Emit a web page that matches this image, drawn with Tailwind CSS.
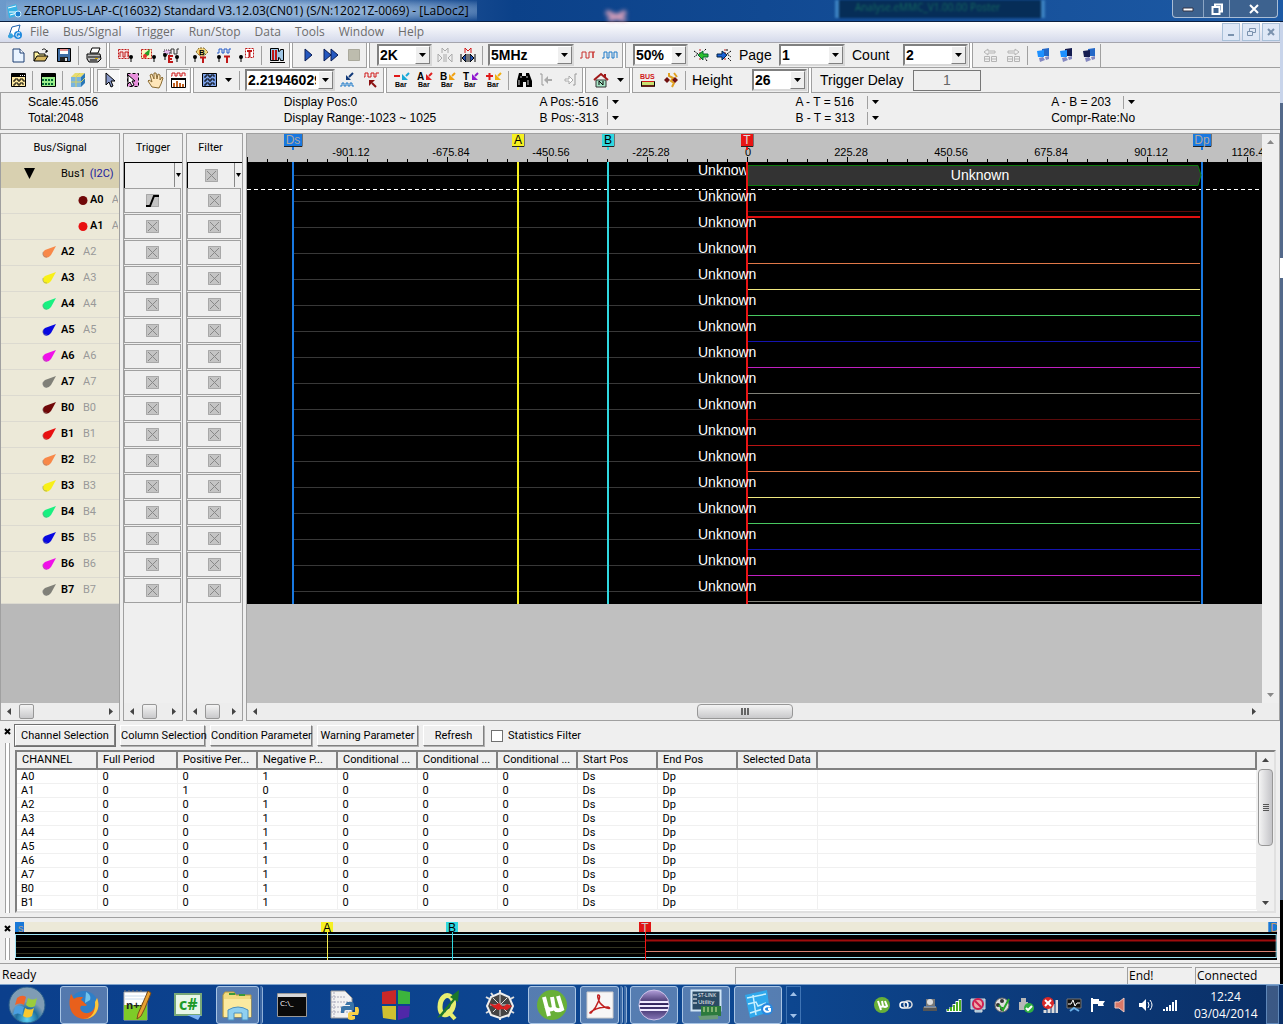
<!DOCTYPE html>
<html lang="en">
<head>
    <meta charset="UTF-8">
    <meta name="viewport" content="width=device-width, initial-scale=1.0">
    <title>ZEROPLUS-LAP-C(16032) Standard V3.12.03(CN01) (S/N:12021Z-0069) - [LaDoc2]</title>
    <script src="https://cdn.jsdelivr.net/npm/@tailwindcss/browser@4"></script>
</head>
<body class="flex min-h-screen flex-col bg-[linear-gradient(#c8d4ea_103px,#53698a_103px,#53698a_258px,#fff_258px,#fff_278px,#53698a_278px,#53698a_900px,#000_900px)] font-['Roboto',sans-serif] text-[11px] leading-[14px] text-black">
    <!-- Title bar -->
    <header class="flex h-[22px] items-start justify-between border-b border-[#0a1f40] bg-linear-to-r from-[#6c9acb] from-0% via-[#0b4189] via-40% to-[#1d5aa5] pl-[6px] pr-[5px] font-['Open_Sans',sans-serif]">
        <div class="flex h-[21px] items-center gap-[2px] bg-radial from-[#8fb0d6] from-40% to-transparent">
            <svg class="h-4 w-4" viewBox="0 0 16 16"><path d="M1 4l9-3 3 11-10 3z" fill="#39b4e6"/><path d="M2 5l8-2M3 9h7M4 12l7-2" stroke="#fff"/><circle cx="12" cy="11" r="3" fill="#1b7fd0" stroke="#cdefff"/></svg>
            <h1 class="pr-2 text-[12px] whitespace-nowrap">ZEROPLUS-LAP-C(16032) Standard V3.12.03(CN01) (S/N:12021Z-0069) - [LaDoc2]</h1>
        </div>
        <svg class="h-[21px] w-6 blur-[2px]" viewBox="0 0 24 21"><path d="M2 12l20 9M22 12L4 21" stroke="#d09cb8" stroke-width="5"/></svg>
        <div class="ml-20 h-[18px] w-[210px] border-x-4 border-[#3a80c0] bg-[#062d57] pl-4 text-[10px] text-[#156a60] blur-[1px]">Analyse.eMMC_V1.00.00 Poster</div>
        <div class="flex h-[18px] rounded-b border border-t-0 border-[#a9bdd6] bg-[#3d628f]">
            <button aria-label="Minimize" class="flex w-[31px] items-center justify-center border-r border-[#8ba5c4]"><svg class="h-3 w-3" viewBox="0 0 12 12"><path d="M1 5h10v3H1z" fill="#fff" stroke="#334"/></svg></button>
            <button aria-label="Restore" class="flex w-[26px] items-center justify-center border-r border-[#8ba5c4]"><svg class="h-3 w-3" viewBox="0 0 12 12"><path d="M4 3V1.500h7v7H9.500M1.500 4h7v7h-7z" fill="none" stroke="#fff" stroke-width="2"/></svg></button>
            <button aria-label="Close" class="flex w-[47px] items-center justify-center"><svg class="h-3 w-3" viewBox="0 0 12 12"><path d="M2 2l8 8M10 2l-8 8" stroke="#fff" stroke-width="2"/></svg></button>
        </div>
    </header>

    <div class="mr-[3px] flex flex-1 flex-col bg-[#efefef]">
        <!-- Menu bar -->
        <nav class="flex h-[21px] items-center border-b border-[#a5a5ad] bg-linear-to-b from-white to-[#d5daeb] pl-[7px] font-['Open_Sans',sans-serif] text-[12px] text-[#6d6d6d]">
            <svg class="mr-[7px] h-4 w-4" viewBox="0 0 16 16"><path d="M2 12l3-9 8-2-3 11z" fill="#fff" stroke="#1b5fae"/><path d="M1 12c2-4 5-3 5 0s-4 3-5 1z" fill="#35a4e0"/><circle cx="11" cy="11" r="4" fill="#1f8adf"/><path d="M13 9c-2-1-4 0-4 2s3 3 4 1h-2" fill="none" stroke="#fff"/></svg>
            <ul class="flex flex-1 gap-[14px]">
                <li><a href="#file">File</a></li>
                <li><a href="#bus">Bus/Signal</a></li>
                <li><a href="#trigger">Trigger</a></li>
                <li><a href="#run">Run/Stop</a></li>
                <li><a href="#data">Data</a></li>
                <li><a href="#tools">Tools</a></li>
                <li><a href="#window">Window</a></li>
                <li><a href="#help">Help</a></li>
            </ul>
            <div class="flex gap-[2px]">
                <button aria-label="Minimize document" class="flex h-[18px] w-[18px] items-center justify-center border border-[#a9c0d8] bg-[#dfe8f6]"><svg class="h-3 w-3" viewBox="0 0 12 12"><path d="M3 9h6" stroke="#7a92ae" stroke-width="2"/></svg></button>
                <button aria-label="Restore document" class="flex h-[18px] w-[18px] items-center justify-center border border-[#a9c0d8] bg-[#dfe8f6]"><svg class="h-3 w-3" viewBox="0 0 12 12"><path d="M4.500 5V2.500h6v4H8M2.500 5.500h5v4h-5z" fill="none" stroke="#7a92ae"/></svg></button>
                <button aria-label="Close document" class="flex h-[18px] w-[18px] items-center justify-center border border-[#a9c0d8] bg-[#dfe8f6]"><svg class="h-3 w-3" viewBox="0 0 12 12"><path d="M3 3l6 6M9 3l-6 6" stroke="#7a92ae" stroke-width="2"/></svg></button>
            </div>
        </nav>

        <!-- Toolbar, first row -->
        <div id="toolbar-1" class="flex h-[25px] items-center border-b border-[#a0a0a0] pl-[6px] font-['Liberation_Sans',sans-serif] text-[14px]">
            <button aria-label="New" class="tool"><svg viewBox="0 0 16 16"><path d="M3 2h7l4 4v9H3z" fill="#eaf4ff" stroke="#1c3f73"/><path d="M10 2v4h4" fill="#fff" stroke="#1c3f73"/></svg></button>
            <button aria-label="Open" class="tool"><svg viewBox="0 0 16 16"><path d="M1 14V5h4l1 2h6v2" fill="#fff3a0" stroke="#000"/><path d="M1 14l3-5h11l-3 5z" fill="#d8b860" stroke="#000"/><path d="M9 3c2-2 4-1 5 2m-2 0h2V3" fill="none" stroke="#000"/></svg></button>
            <button aria-label="Save" class="tool"><svg viewBox="0 0 16 16"><path d="M1.500 1.500h13v13h-13z" fill="#3f6da3" stroke="#000"/><path d="M4 2h8v5H4z" fill="#fff"/><path d="M4 3h8" stroke="#c22"/><path d="M4 10h8v4H4z" fill="#222"/><path d="M9 11h2v3H9z" fill="#ddd"/></svg></button>
            <i class="sep"></i>
            <button aria-label="Print" class="tool"><svg viewBox="0 0 16 16"><path d="M4 6l2-5h8l-2 5z" fill="#fff" stroke="#000"/><path d="M1 7h13l1 5-3 3H3l-2-3z" fill="#bcbcbc" stroke="#000"/><path d="M2 10h12M4 13h7" stroke="#000"/><path d="M9 11.500h3" stroke="#d8a800"/></svg></button>
            <i class="grip"></i>
            <button aria-label="Sampling setup" class="tool"><svg viewBox="0 0 16 16"><path d="M1.500 2.500h10v9h-10z" fill="#f6dede" stroke="#c01818" stroke-dasharray="2 1"/><path d="M3 10V5h3v5h2V5h3v5" fill="none" stroke="#c01818"/><path d="M14 9v6" stroke="#000"/><circle cx="14" cy="10" r="2"/></svg></button>
            <button aria-label="Channel setup" class="tool"><svg viewBox="0 0 16 16"><path d="M1.500 2.500h10v9h-10z" fill="#fff6c0" stroke="#c01818" stroke-dasharray="2 1"/><path d="M3 11l2-5 5-4-1 6z" fill="#24a024"/><circle cx="5" cy="9" r="2" fill="#f03030"/><path d="M14 9v6" stroke="#000"/><circle cx="14" cy="10" r="2"/></svg></button>
            <button aria-label="External trigger" class="tool"><svg viewBox="0 0 16 16"><path d="M1 3h6v4H1z" fill="#e6b8ea" stroke="#333" stroke-dasharray="1 1"/><path d="M8 7V2h3v5h3V2h2" fill="none" stroke="#333"/><path d="M2 8v5" stroke="#000"/><circle cx="2" cy="8" r="2"/><path d="M10 9H6v6h4M6 12h3" fill="none" stroke="#c01818" stroke-width="2"/><path d="M14 10v5" stroke="#000"/><circle cx="14" cy="10" r="2"/></svg></button>
            <i class="sep"></i>
            <button aria-label="Bus trigger" class="tool"><svg viewBox="0 0 16 16"><path d="M3 5l3-4h5l4 4-4 4H7z" fill="#f3d57a" stroke="#7c6328" stroke-dasharray="2 1"/><text x="6" y="8" font-size="8" font-weight="bold">B</text><path d="M2 9v6" stroke="#000"/><circle cx="2" cy="10" r="2"/><path d="M7 10.500h6M10 11v5" stroke="#c01818" stroke-width="2"/></svg></button>
            <button aria-label="Pulse trigger" class="tool"><svg viewBox="0 0 16 16"><path d="M1 6h2V2h3v4h2V2h3v4h2V2h2" fill="none" stroke="#2058c8"/><path d="M3 9v6" stroke="#000"/><circle cx="3" cy="10" r="2"/><path d="M8 9.500h6M11 10v6" stroke="#c01818" stroke-width="2"/></svg></button>
            <button aria-label="Trigger position" class="tool"><svg viewBox="0 0 16 16"><path d="M6.500 1.500h8v9h-8z" fill="#fff" stroke="#c01818" stroke-dasharray="2 1"/><path d="M8 4h5M10.500 4v6" stroke="#c01818" stroke-width="2"/><path d="M2 8v7" stroke="#000"/><circle cx="2" cy="10" r="2"/></svg></button>
            <i class="sep"></i>
            <button aria-label="Data compression" class="tool"><svg viewBox="0 0 16 16"><path d="M1.500 1.500h8v3q2 0 2-2h3v11h-3q0-3-2-3v3h-8z" fill="#9fc6e6" stroke="#000"/><path d="M4 3v10M7 3v10" stroke="#c01818" stroke-width="2"/><path d="M1 15.500h15" stroke="#000"/></svg></button>
            <i class="grip"></i>
            <button aria-label="Single run" class="tool"><svg viewBox="0 0 16 16"><path d="M5 2l7 6-7 6z" fill="#2458c0" stroke="#0a1d52"/></svg></button>
            <button aria-label="Repetitive run" class="tool"><svg viewBox="0 0 16 16"><path d="M1 2l7 6-7 6zM8 2l7 6-7 6z" fill="#2458c0" stroke="#0a1d52"/></svg></button>
            <button aria-label="Stop" class="tool"><svg viewBox="0 0 16 16"><path d="M2.500 2.500h11v11h-11z" fill="#bdbcae" stroke="#aaa99c"/></svg></button>
            <i class="grip"></i>
            <label class="combo ml-1 w-[55px]"><select aria-label="Memory depth"><option>2K</option></select></label>
            <button aria-label="Previous mark" class="tool ml-px"><svg viewBox="0 0 16 16"><path d="M5 6V1l3 3 3-3v5" fill="none" stroke="#aaa"/><path d="M1 7l4 4-4 4zM15 7l-4 4 4 4zM7 7v8M9 7v8" fill="none" stroke="#aaa"/></svg></button>
            <button aria-label="Next mark" class="tool"><svg viewBox="0 0 16 16"><path d="M5 6V1l3 3 3-3v5" fill="none" stroke="#d01818"/><path d="M1 7v8M15 7v8M8 7v8" stroke="#000"/><path d="M2 11l4-4v8zM14 11l-4-4v8z" fill="#2050b0" stroke="#000"/></svg></button>
            <i class="sep"></i>
            <label class="combo ml-[2px] w-[86px]"><select aria-label="Sampling frequency"><option>5MHz</option></select></label>
            <button aria-label="Slower" class="tool ml-px"><svg viewBox="0 0 16 16"><path d="M1 11h2V5h4v6h3V5h4v6h0V5h2" fill="none" stroke="#c8302c"/></svg></button>
            <button aria-label="Faster" class="tool"><svg viewBox="0 0 16 16"><path d="M0 11h2V5h3v6h2V5h3v6h2V5h3v6" fill="none" stroke="#1a78c8"/></svg></button>
            <i class="grip"></i>
            <label class="combo ml-1 w-[55px]"><select aria-label="Trigger position percent"><option>50%</option></select></label>
            <button aria-label="Move trigger left" class="tool ml-px"><svg viewBox="0 0 16 16"><path d="M1 4l4 3-4 3M13 2l-2 2M14 14l-2-3" stroke="#000" fill="none" stroke-dasharray="2 1"/><path d="M7 2v12" stroke="#c01818" stroke-dasharray="2 1"/><path d="M5 8l5-4v3h5v3h-5v3z" fill="#2ec02e" stroke="#063"/></svg></button>
            <button aria-label="Move trigger right" class="tool"><svg viewBox="0 0 16 16"><path d="M15 4l-4 3 4 3M11 2v3M12 11l3 3" stroke="#000" fill="none" stroke-dasharray="2 1"/><path d="M9 2v12" stroke="#c01818" stroke-dasharray="2 1"/><path d="M11 8L6 4v3H1v3h5v3z" fill="#1c62d8" stroke="#024"/></svg></button>
            <label for="page" class="ml-1 w-10">Page</label>
            <span class="combo w-[66px]"><select id="page"><option>1</option></select></span>
            <label for="count" class="ml-[7px] w-[51px]">Count</label>
            <span class="combo w-[65px]"><select id="count"><option>2</option></select></span>
            <i class="grip"></i>
            <button aria-label="Previous difference" class="tool ml-[2px]"><svg viewBox="0 0 16 16"><path d="M2 5l4-3v2h7v2H6v2zM2.500 9.500h5v5h-5zM9.500 9.500h5v5h-5zM3 12h4M10 12h4" fill="none" stroke="#b4b4b4"/></svg></button>
            <button aria-label="Next difference" class="tool"><svg viewBox="0 0 16 16"><path d="M14 5l-4-3v2H3v2h7v2zM2.500 9.500h5v5h-5zM9.500 9.500h5v5h-5zM3 12h4M10 12h4" fill="none" stroke="#b4b4b4"/></svg></button>
            <i class="sep"></i>
            <button aria-label="Connect both" class="tool"><svg viewBox="0 0 16 16"><path d="M7 2l7-1v8H7z" fill="#2468c8"/><path d="M2 4l7-1v7H3z" fill="#1e90ff"/><path d="M4 11l4-1 2 3-5 2zM10 10l4-1v3l-3 1z" fill="#8488c0"/></svg></button>
            <button aria-label="Connect first" class="tool"><svg viewBox="0 0 16 16"><path d="M7 2l7-1v8H7z" fill="#141c50"/><path d="M2 4l7-1v7H3z" fill="#1e90ff"/><path d="M4 11l4-1 2 3-5 2zM10 10l4-1v3l-3 1z" fill="#8488c0"/></svg></button>
            <button aria-label="Connect second" class="tool"><svg viewBox="0 0 16 16"><path d="M7 2l7-1v8H7z" fill="#2468c8"/><path d="M2 4l7-1v7H3z" fill="#141c50"/><path d="M4 11l4-1 2 3-5 2zM10 10l4-1v3l-3 1z" fill="#8488c0"/></svg></button>
            <i class="h-[23px] w-px bg-[#a0a0a0]"></i>
        </div>

        <!-- Toolbar, second row -->
        <div id="toolbar-2" class="flex h-[25px] items-center border-b border-[#a0a0a0] pl-[6px] font-['Liberation_Sans',sans-serif] text-[14px]">
            <button aria-label="Waveform view" class="tool"><svg viewBox="0 0 16 16"><path d="M1.500 1.500h14v13h-14z" fill="#ffe9a0" stroke="#000"/><path d="M1 2h15v3H1z"/><path d="M10 3.500h5" stroke="#fff" stroke-dasharray="1 1"/><path d="M3 9h2V7h3v2h2V7h3v2h2M3 13h2v-2h3v2h2v-2h3v2" fill="none" stroke="#000"/></svg></button>
            <i class="sep"></i>
            <button aria-label="Listing view" class="tool"><svg viewBox="0 0 16 16"><path d="M1.500 1.500h14v13h-14z" fill="#9bee8a" stroke="#000"/><path d="M1 2h15v3H1z"/><path d="M3 7v2M6 7v2M9 7v2M12 7v2M3 11v2M6 11v2M9 11v2M12 11v2" stroke="#063" stroke-width="2"/></svg></button>
            <i class="sep"></i>
            <button aria-label="Navigator" class="tool"><svg viewBox="0 0 16 16"><path d="M1 5l4-4h10l-4 4z" fill="#e8dc70"/><path d="M11 5l4-4v10l-4 4z" fill="#2a78b8"/><path d="M1 5h10v10H1z" fill="#79b4e0"/><path d="M6 5v10M1 10h10M6 5l4-4M11 10l4-4" stroke="#d8d060"/></svg></button>
            <i class="grip"></i>
            <button aria-label="Select" aria-pressed="true" class="tool pressed"><svg viewBox="0 0 16 16"><path d="M5 1v12l3-3 2 5 2-1-2-5h4z" fill="#8898c8" stroke="#000"/></svg></button>
            <button aria-label="Area select" class="tool"><svg viewBox="0 0 16 16"><path d="M3.500 1.500h11v13h-11z" fill="#e890dc" stroke="#000" stroke-dasharray="3 2"/><path d="M4 3v9l2-2 2 4 2-1-2-4h3z" fill="#fff" stroke="#000"/></svg></button>
            <button aria-label="Hand" class="tool"><svg viewBox="0 0 16 16"><path d="M5 15l-4-6 1-1 3 2-2-7 2-1 2 5V1h2l1 6 1-5 2 1v5l2-3 1 1-2 6-2 4z" fill="#ffe6b8" stroke="#8a6b33"/></svg></button>
            <button aria-label="Waveform mode" aria-pressed="true" class="tool pressed"><svg viewBox="0 0 16 16"><path d="M1 4h1V1h3v3h2V1h3v3h2V1h3v3" fill="none" stroke="#d01818"/><path d="M1.500 6.500h14v9h-14z" fill="#fff" stroke="#000"/><path d="M4 15v-4M7 15V9M10 15v-4M13 15v-3" stroke="#c06020" stroke-width="2"/><path d="M1 6h15v2H1z"/></svg></button>
            <i class="grip"></i>
            <button aria-label="Bus width" class="tool"><svg viewBox="0 0 16 16"><path d="M1.500 1.500h14v13h-14z" fill="#7aa0e8" stroke="#000"/><path d="M3 5h2V3h3v2h2V3h3v2M3 9h2V7h3v2h2V7h3v2M3 13h2v-2h3v2h2v-2h3v2" fill="none" stroke="#000"/></svg></button>
            <button aria-label="Bus width menu" class="flex w-[16px] justify-center"><svg class="h-1 w-[7px]" viewBox="0 0 7 4"><path d="M0 0h7L3.500 4z"/></svg></button>
            <i class="sep"></i>
            <label class="combo ml-[2px] w-[90px]"><select aria-label="Zoom value"><option>2.21946029</option></select></label>
            <button aria-label="Zoom in wave" class="tool ml-px"><svg viewBox="0 0 16 16"><path d="M0 14h2v-3h2v3h2v-3h2v3h2v-3h2v3h2" fill="none" stroke="#1a78c8"/><path d="M13 1L9 5" stroke="#103878" stroke-width="2"/><path d="M6 3v5h5z" fill="#103878"/></svg></button>
            <button aria-label="Zoom out wave" class="tool"><svg viewBox="0 0 16 16"><path d="M1 5h1V1h3v4h3V1h3v4h2V1h3" fill="none" stroke="#d01818"/><path d="M13 15l-4-4" stroke="#8a1010" stroke-width="2"/><path d="M6 8v6l6-6z" fill="#8a1010"/></svg></button>
            <i class="grip"></i>
            <button aria-label="Delete bar" class="tool"><svg viewBox="0 0 16 16"><path d="M0 4h6" stroke="#e01818" stroke-width="2"/><path d="M15 1l-3 3" stroke="#18a8d8" stroke-width="2"/><path d="M8 2v6h6z" fill="#18a8d8"/><text x="1" y="15" font-size="7" font-weight="bold">Bar</text></svg></button>
            <button aria-label="A bar" class="tool"><svg viewBox="0 0 16 16"><text x="0" y="8" font-size="10" font-weight="bold">A</text><path d="M15 1l-3 3" stroke="#e02020" stroke-width="2"/><path d="M9 2v6h6z" fill="#e02020"/><text x="1" y="15" font-size="7" font-weight="bold">Bar</text></svg></button>
            <button aria-label="B bar" class="tool"><svg viewBox="0 0 16 16"><text x="0" y="8" font-size="10" font-weight="bold">B</text><path d="M15 1l-3 3" stroke="#f0a010" stroke-width="2"/><path d="M9 2v6h6z" fill="#f0a010"/><text x="1" y="15" font-size="7" font-weight="bold">Bar</text></svg></button>
            <button aria-label="T bar" class="tool"><svg viewBox="0 0 16 16"><text x="0" y="8" font-size="10" font-weight="bold">T</text><path d="M15 1l-3 3" stroke="#9018d0" stroke-width="2"/><path d="M9 2v6h6z" fill="#9018d0"/><text x="1" y="15" font-size="7" font-weight="bold">Bar</text></svg></button>
            <button aria-label="Add bar" class="tool"><svg viewBox="0 0 16 16"><path d="M0 4h7M3.500 1v7" stroke="#e01818" stroke-width="2"/><path d="M15 1l-3 3" stroke="#f0b010" stroke-width="2"/><path d="M9 2v6h6z" fill="#f0b010"/><text x="1" y="15" font-size="7" font-weight="bold">Bar</text></svg></button>
            <i class="sep"></i>
            <button aria-label="Find" class="tool"><svg viewBox="0 0 16 16"><path d="M3 1h3v3h4V1h3l3 8v6h-6v-5H7v5H1V9z"/><path d="M3 8v5M12 8v5M5 4v2M11 4v2" stroke="#ccc"/></svg></button>
            <button aria-label="Find previous" class="tool"><svg viewBox="0 0 16 16"><path d="M3 2v11h2M1 2h2" stroke="#999" fill="none"/><path d="M5 8l4-4v3h4v2H9v3z" fill="#aaa"/></svg></button>
            <button aria-label="Find next" class="tool"><svg viewBox="0 0 16 16"><path d="M13 13V2h2M13 13h-2" stroke="#999" fill="none"/><path d="M11 8L7 4v3H3v2h4v3z" fill="#fff" stroke="#aaa"/></svg></button>
            <i class="grip"></i>
            <button aria-label="Home" class="tool"><svg viewBox="0 0 16 16"><path d="M3 8h10v7H3z" fill="#a8e8c8" stroke="#333"/><path d="M1 8l7-6 7 6M12 2v3" fill="none" stroke="#a01818" stroke-width="2"/><path d="M6 13V9l4 4V9" fill="none" stroke="#000"/></svg></button>
            <button aria-label="Home menu" class="flex w-[16px] justify-center"><svg class="h-1 w-[7px]" viewBox="0 0 7 4"><path d="M0 0h7L3.500 4z"/></svg></button>
            <i class="grip"></i>
            <button aria-label="Bus analysis" class="tool"><svg viewBox="0 0 16 16"><text x="0" y="7" font-size="7" font-weight="bold" fill="#d01818">BUS</text><path d="M1.500 9.500h13v5h-13z" fill="#c8e070" stroke="#000"/><path d="M2 13h12v2H2z" fill="#602018"/><path d="M2 9.500h12" stroke="#d01818"/></svg></button>
            <button aria-label="Synchronise" class="tool"><svg viewBox="0 0 16 16"><path d="M6 1v3l4 2-2 3 3 2-2 4M11 1l3 4" fill="none" stroke="#e0a020" stroke-width="2"/><path d="M4 5l3 3-3 3-3-3z" fill="#701010"/><path d="M12 5l3 3-3 3-3-3z" fill="#701010"/></svg></button>
            <i class="sep"></i>
            <label for="height" class="ml-[3px] w-[60px]">Height</label>
            <span class="combo w-[55px]"><select id="height"><option>26</option></select></span>
            <i class="grip"></i>
            <label for="delay" class="ml-[5px] w-[93px]">Trigger Delay</label>
            <input id="delay" type="text" value="1" disabled class="h-[21px] w-[68px] border border-[#777] text-center text-[#666]">
        </div>

        <!-- Position info -->
        <section class="mb-[3px] grid h-[37px] grid-cols-5 border-b border-l border-[#a0a0a0] font-['Liberation_Sans',sans-serif] text-[12px] leading-4">
            <div class="pl-[27px] pt-px"><p>Scale:45.056</p><p>Total:2048</p></div>
            <div class="pl-[27px] pt-px"><p>Display Pos:0</p><p>Display Range:-1023 ~ 1025</p></div>
            <div class="pl-[27px] pt-px">
                <div class="flex items-center"><p class="w-[67px]">A Pos:-516</p><button aria-label="A position" class="drop"></button></div>
                <div class="flex items-center"><p class="w-[67px]">B Pos:-313</p><button aria-label="B position" class="drop"></button></div>
            </div>
            <div class="pl-[27px] pt-px">
                <div class="flex items-center"><p class="w-[72px]">A - T = 516</p><button aria-label="A to T" class="drop"></button></div>
                <div class="flex items-center"><p class="w-[72px]">B - T = 313</p><button aria-label="B to T" class="drop"></button></div>
            </div>
            <div class="pl-[27px] pt-px">
                <div class="flex items-center"><p class="w-[72px]">A - B = 203</p><button aria-label="A to B" class="drop"></button></div>
                <p>Compr-Rate:No</p>
            </div>
        </section>

        <!-- Signals and waveforms -->
        <main class="flex flex-1 gap-[3px]">
            <section class="flex w-[120px] flex-col border border-[#a0a0a0] bg-[#b9b9b9]">
                <h2 class="flex h-7 items-center justify-center bg-[#efefef]">Bus/Signal</h2>
                <ul id="signals" class="flex-1"></ul>
                <div class="scrollbar"></div>
            </section>
            <section class="flex w-[60px] flex-col border border-[#a0a0a0]">
                <h2 class="flex h-7 items-center justify-center">Trigger</h2>
                <div id="triggers" class="flex-1"></div>
                <div class="scrollbar"></div>
            </section>
            <section class="flex w-[57px] flex-col border border-[#a0a0a0]">
                <h2 class="flex h-7 items-center justify-center pr-2">Filter</h2>
                <div id="filters" class="flex-1"></div>
                <div class="scrollbar"></div>
            </section>
            <section class="flex min-w-0 flex-1 flex-col border border-[#a0a0a0]">
                <div class="flex flex-1">
                    <div class="min-w-0 flex-1 bg-[#c0c0c0]">
                        <svg id="plot" class="block h-[470px] w-full" font-family="Liberation Sans, sans-serif"></svg>
                    </div>
                    <div class="flex w-[17px] flex-col items-center justify-between bg-[#efefef] py-[6px]">
                        <svg class="h-1 w-[7px]" viewBox="0 0 7 4"><path d="M0 4h7L3.500 0z" fill="#888"/></svg>
                        <svg class="h-1 w-[7px]" viewBox="0 0 7 4"><path d="M0 0h7L3.500 4z" fill="#888"/></svg>
                    </div>
                </div>
                <div class="flex h-[17px] items-center bg-[#ededed] pl-[6px] pr-[23px]">
                    <svg class="h-[7px] w-1" viewBox="0 0 4 7"><path d="M4 0v7L0 3.500z" fill="#444"/></svg>
                    <div class="flex flex-1 justify-center"><div class="mr-[20px] flex h-[15px] w-24 items-center justify-center gap-px rounded-sm border border-[#979797] bg-linear-to-b from-[#f4f4f4] to-[#c9c9cb]"><i class="h-[7px] w-[2px] bg-[#666]"></i><i class="h-[7px] w-[2px] bg-[#666]"></i><i class="h-[7px] w-[2px] bg-[#666]"></i></div></div>
                    <svg class="h-[7px] w-1" viewBox="0 0 4 7"><path d="M0 0v7l4-3.500z" fill="#444"/></svg>
                </div>
            </section>
        </main>

        <!-- Statistics dock -->
        <section class="flex h-[197px] border-b border-[#a0a0a0] pb-[4px] pr-[4px]">
            <div class="flex w-[15px] flex-col items-center gap-2 pt-[7px]">
                <button aria-label="Close statistics"><svg class="h-[7px] w-[7px]" viewBox="0 0 7 7"><path d="M1 1l5 5M6 1L1 6" stroke="#000" stroke-width="2"/></svg></button>
                <i class="w-[5px] flex-1 border-x border-[#a0a0a0] bg-white"></i>
            </div>
            <div class="flex min-w-0 flex-1 flex-col">
                <div class="flex h-[29px] items-center gap-[5px]">
                    <button class="push w-[100px] outline outline-[#707070]">Channel Selection</button>
                    <button class="push w-[85px]">Column Selection</button>
                    <button class="push w-[102px]">Condition Parameter</button>
                    <button class="push w-[101px]">Warning Parameter</button>
                    <button class="push w-[61px]">Refresh</button>
                    <label class="ml-[2px] flex items-center gap-[5px]"><input type="checkbox" class="h-3 w-3 appearance-none border border-[#707070] bg-white">Statistics Filter</label>
                </div>
                <div class="flex flex-1 border-2 border-[#808080] border-b-[#e0e0e0] border-r-[#e0e0e0] bg-white">
                    <div class="min-w-0 flex-1 overflow-hidden">
                        <table class="w-full table-fixed border-collapse">
                            <thead id="stat-head"></thead>
                            <tbody id="stat-body"></tbody>
                        </table>
                    </div>
                    <div class="flex w-[17px] flex-col items-center bg-[#efefef] py-[6px]">
                        <svg class="h-1 w-[7px]" viewBox="0 0 7 4"><path d="M0 4h7L3.500 0z" fill="#444"/></svg>
                        <div class="mt-[7px] flex h-[77px] w-[15px] flex-col items-center justify-center gap-px rounded-sm border border-[#979797] bg-linear-to-r from-[#f4f4f4] to-[#c4c4c8]"><i class="h-px w-[6px] bg-[#555]"></i><i class="h-px w-[6px] bg-[#555]"></i><i class="h-px w-[6px] bg-[#555]"></i><i class="h-px w-[6px] bg-[#555]"></i></div>
                        <svg class="mt-auto h-1 w-[7px]" viewBox="0 0 7 4"><path d="M0 0h7L3.500 4z" fill="#444"/></svg>
                    </div>
                </div>
            </div>
        </section>

        <!-- Navigator dock -->
        <section class="flex h-[46px] border-b border-[#a0a0a0] pb-[3px] pr-[3px] pt-1">
            <div class="flex w-[15px] flex-col items-center gap-[6px] pt-[3px]">
                <button aria-label="Close navigator"><svg class="h-[7px] w-[7px]" viewBox="0 0 7 7"><path d="M1 1l5 5M6 1L1 6" stroke="#000" stroke-width="2"/></svg></button>
                <i class="w-[5px] flex-1 border-x border-[#a0a0a0] bg-white"></i>
            </div>
            <svg class="h-[38px] min-w-0 flex-1 bg-black" font-family="Liberation Sans, sans-serif" font-size="12">
                <rect width="100%" height="10" fill="#ece9d8"/>
                <path d="M0 19.500h631M0 25.500h631M0 31.500h631" stroke="#333322"/>
                <path d="M631 18.500h1300" stroke="#a00c0c" stroke-width="2"/>
                <path d="M631 29.500h1300" stroke="#d88070"/>
                <rect x="0.500" y="12.500" width="99.900%" height="23" fill="none" stroke="#9fe4f4"/>
                <rect width="9" height="10" fill="#1878d8"/><text x="3" y="10" font-size="11" fill="#b0a090">s</text>
                <rect x="306" width="12" height="10" fill="#f6f020"/><text x="312" y="10" text-anchor="middle">A</text><path d="M312.500 10v28" stroke="#f8f050"/>
                <rect x="431" width="12" height="10" fill="#30d8e0"/><text x="437" y="10" text-anchor="middle">B</text><path d="M437.500 10v28" stroke="#30d8e0"/>
                <rect x="624" width="12" height="10" fill="#e01414"/><text x="630" y="10" text-anchor="middle" fill="#ccc">T</text><path d="M630.500 10v28" stroke="#f01414"/>
                <svg x="99.300%" width="9" height="10"><rect width="9" height="10" fill="#1878d8"/><text x="2" y="10" fill="#c09a70">D</text></svg>
            </svg>
        </section>

        <!-- Status bar -->
        <footer class="flex h-[20px] items-stretch gap-[3px] pt-[3px] font-['Open_Sans',sans-serif] text-[12px] leading-4">
            <p class="w-[732px] pl-[2px]">Ready</p>
            <p class="flex-1 border-l border-t border-[#a0a0a0]"></p>
            <p class="w-[65px] border-l border-t border-[#a0a0a0] pl-px">End!</p>
            <p class="w-[85px] border-l border-t border-[#a0a0a0] pl-px">Connected</p>
        </footer>
    </div>

    <!-- Taskbar -->
    <nav class="flex h-10 items-center border-t border-[#7fa3cc] bg-linear-to-r from-[#0b3f8c] via-[#0d4791] via-60% to-[#0a2f66] pr-1 font-['Open_Sans',sans-serif] text-[12px] leading-[17px] text-white">
        <button aria-label="Start" class="mr-[6px] flex w-[54px] justify-center"><svg class="h-[38px] w-[38px]" viewBox="0 0 38 38"><defs><radialGradient id="orb" cy="0.900"><stop offset="0" stop-color="#5fd4f4"/><stop offset="0.600" stop-color="#1f6f9f"/><stop offset="1" stop-color="#7f9cb4"/></radialGradient></defs><circle cx="19" cy="19" r="18" fill="url(#orb)" stroke="#2a5f8c"/><path d="M9 12q5-4 9-1l-2 8q-4-3-9 0z" fill="#f0642a"/><path d="M20 12q5 3 9 0l-2 8q-5 3-9-1z" fill="#9bcc3c"/><path d="M7 21q4-3 9 0l-2 8q-4-3-9 0z" fill="#4a9fe0"/><path d="M17 22q5 3 9 0l-2 8q-5 3-9 0z" fill="#f8c830"/></svg></button>
        <div class="flex items-center gap-1">
            <button aria-label="Firefox" class="task open"><svg viewBox="0 0 32 32"><circle cx="16" cy="16" r="14" fill="#2f7fc8"/><path d="M18 3c4 2 5 5 4 8l-5 3z" fill="#6fc4ee"/><path d="M3 5c-4 12 0 24 13 25 12 0 17-12 13-21 0 3-1 4-2 4 1 8-5 12-10 11-4-1-6-4-4-7 2-1 4 1 6-1-2-1-4-4-6-5l2-3c-4 0-7 0-9 2z" fill="#e8601c"/><path d="M29 9c5 12-4 22-14 21 8 0 13-7 12-17z" fill="#fbc93a"/></svg></button>
            <button aria-label="Notepad++" class="task"><svg viewBox="0 0 32 32"><path d="M4 3h23v28H4z" fill="#fff" stroke="#aaa"/><path d="M4 16h23v15H4z" fill="#7ecb28"/><path d="M5 3v-2M9 3v-2M13 3v-2M17 3v-2M21 3v-2" stroke="#777"/><path d="M5 7h20M5 10h20" stroke="#cde"/><text x="6" y="20" font-size="11" font-weight="bold" fill="#222">n++</text><path d="M28 2l3 2-6 15-4 8-4 3 1-5z" fill="#e8a030" stroke="#7a4a18"/></svg></button>
            <button aria-label="SharpDevelop" class="task"><svg viewBox="0 0 32 32"><path d="M3 5h26v21H3z" fill="#e8f6e8" stroke="#78a878" stroke-width="2"/><text x="7" y="21" font-size="16" font-weight="bold" fill="#1c9a28">c#</text><path d="M15 26l14 0-3 5z" fill="#7ab0f0"/></svg></button>
            <div class="flex w-12 gap-px">
                <button aria-label="Explorer" class="task open w-[43px]"><svg viewBox="0 0 32 32"><path d="M1 6l2-3h9l2 3h15v22H1z" fill="#f2da80" stroke="#b89838"/><path d="M7 5h6M17 6h6" stroke="#3a9a3a" stroke-width="2"/><path d="M2 10h27v18H2z" fill="#fbeaa0"/><path d="M6 31V21q10-6 20 0v10h-6v-7h-8v7z" fill="#8fd0f0" stroke="#4a90c0"/></svg></button>
                <i class="stack"></i>
            </div>
            <button aria-label="Command prompt" class="task"><svg viewBox="0 0 32 32"><path d="M1.500 4.500h29v23h-29z" fill="#0a0a0a" stroke="#999"/><path d="M2 5h28v3H2z" fill="#d8d8d8"/><text x="4" y="17" font-size="8" fill="#fff">C:\_</text></svg></button>
            <button aria-label="Python" class="task"><svg viewBox="0 0 32 32"><path d="M3 2h14l7 7v20H3z" fill="#f2f2f2" stroke="#999"/><path d="M6 3v26M3 8h15M3 13h20M3 18h20M3 23h20" stroke="#aab" stroke-dasharray="2 1"/><path d="M19 13h5q2 0 2 3v5h-8q-2 0-2 3h-3v-5q0-2 3-2h6v-1h-5z" fill="#3a74a8"/><path d="M27 18h3q2 3 0 8h-7v1h4v3q-4 2-7 0v-5q0-2 3-2h4z" fill="#f8d048"/></svg></button>
            <button aria-label="Blocks" class="task"><svg viewBox="0 0 32 32"><path d="M2 3l14-2v14H2z" fill="#c82828"/><path d="M18 1l12 2v12H18z" fill="#3cb43c"/><path d="M2 17h14v14l-13-2z" fill="#d0c030"/><path d="M18 17h12l-1 11-11 3z" fill="#5028a8"/></svg></button>
            <button aria-label="QGIS" class="task"><svg viewBox="0 0 32 32"><path d="M19 8c-5-4-11 1-11 10 0 8 6 10 10 5 4-4 5-11 1-15z" fill="none" stroke="#e8ee70" stroke-width="5"/><path d="M15 21l8 9" stroke="#e8ee70" stroke-width="4"/><path d="M5 29l16-19-3-2 9-7-1 12-3-2L10 27z" fill="#1c7828"/></svg></button>
            <button aria-label="Spider" class="task"><svg viewBox="0 0 32 32"><path d="M16 1v30M2 8l28 16M30 8L2 24M7 4l18 24" stroke="#ddd" stroke-width="2"/><path d="M16 4l9 4 4 9-4 9-9 3-9-3-4-9 4-9z" fill="#444" stroke="#eee" stroke-width="2"/><path d="M16 5v22M6 16h20M9 9l14 14M23 9L9 23" stroke="#ddd"/><path d="M5 14l6 2 4-2 4 4 4-3 5 2-5 4-5-1-4 1-5-3z" fill="#d82020"/></svg></button>
            <button aria-label="uTorrent" class="task open"><svg viewBox="0 0 32 32"><circle cx="16" cy="16" r="15" fill="#68b038"/><path d="M8 8l5 19M10 17q3 6 8 2l-2-11M18 19q3 4 8 1L22 7" fill="none" stroke="#fff" stroke-width="4"/></svg></button>
            <div class="flex w-[46px] gap-px">
                <button aria-label="Acrobat" class="task open w-[39px]"><svg viewBox="0 0 32 32"><path d="M3 3h26v26H3z" fill="#f6f6f6" stroke="#ccc"/><path d="M14 6c4-1 0 11-7 18-4 1 4-6 17-6 5 2-2 3-8-4-2-4-3-7-2-8z" fill="none" stroke="#c02020" stroke-width="1.500"/></svg></button>
                <i class="stack"></i><i class="stack"></i>
            </div>
            <button aria-label="Eclipse" class="task open"><svg viewBox="0 0 32 32"><defs><linearGradient id="ecl" x2="0" y2="1"><stop offset="0" stop-color="#b4a0dc"/><stop offset="0.500" stop-color="#2c1f58"/><stop offset="1" stop-color="#8878b8"/></linearGradient></defs><circle cx="16" cy="16" r="15" fill="url(#ecl)" stroke="#cdc4e8"/><path d="M2 13h28M1 17h30M2 21h28" stroke="#efeaff" stroke-width="2"/></svg></button>
            <button aria-label="ST-Link Utility" class="task open"><svg viewBox="0 0 32 32"><path d="M1.500 1.500h29v20h-29z" fill="#2a4a64" stroke="#cfe4f4" stroke-width="2"/><text x="8" y="8" font-size="5" fill="#fff">ST-LINK</text><text x="8" y="15" font-size="6" fill="#fff">Utility</text><path d="M3 6h4M3 10h4M3 14h4" stroke="#fff"/><path d="M11 17h20v10H11z" fill="#2c7a3c"/><path d="M14 18v5M18 18v5M22 18v5M26 18v5" stroke="#d8e8a0"/><path d="M8 27l20-1v4l-18 1z" fill="#6a9a78"/></svg></button>
            <button aria-label="ZEROPLUS" class="task open"><svg viewBox="0 0 32 32"><path d="M3 6l22-5 3 22-20 6z" fill="#2fa8ec"/><path d="M5 9l19-4M6 15l8-2 2 4 8-3M8 24l16-5M11 6l3 20" fill="none" stroke="#c8f0ff" stroke-width="1.500"/><circle cx="25" cy="20" r="6" fill="#2888e0"/><path d="M28 18c-3-2-6 0-6 2s3 4 6 2v-2h-2" fill="none" stroke="#fff" stroke-width="2"/></svg></button>
            <button aria-label="Scroll tasks" class="flex h-[38px] w-[15px] flex-col items-center justify-between border border-[#3f74b4] py-[5px]"><svg class="h-1 w-[7px]" viewBox="0 0 7 4"><path d="M0 4h7L3.500 0z" fill="#9fc0e8"/></svg><svg class="h-1 w-[7px]" viewBox="0 0 7 4"><path d="M0 0h7L3.500 4z" fill="#9fc0e8"/></svg></button>
        </div>
        <div class="ml-auto flex gap-2">
            <svg class="h-4 w-4" viewBox="0 0 16 16"><circle cx="8" cy="8" r="8" fill="#68b038"/><path d="M4 4l3 9M5 8q2 3 4 1L8 4M9 9q2 2 4 0l-2-5" fill="none" stroke="#fff" stroke-width="2"/></svg>
            <svg class="h-4 w-4" viewBox="0 0 16 16"><rect x="2" y="5" width="8" height="6" rx="3" fill="none" stroke="#fff" stroke-width="1.500"/><rect x="6" y="4" width="8" height="7" rx="3.500" fill="none" stroke="#ddd" stroke-width="1.500"/></svg>
            <svg class="h-4 w-4" viewBox="0 0 16 16"><path d="M4 2h9v7H4z" fill="#777"/><circle cx="8" cy="5" r="3" fill="#ddd"/><path d="M1 10h14v4H1z" fill="#555"/><path d="M2 10h12" stroke="#ccc"/></svg>
            <svg class="h-4 w-4" viewBox="0 0 16 16"><path d="M2 15v-3M5 15v-5M8 15V7M11 15V4M14 15V2" stroke="#fff" stroke-width="3"/><path d="M2 14v-2M5 14v-4M8 14V8M11 14V5M14 14V3" stroke="#4cae20" stroke-width="2"/></svg>
            <svg class="h-4 w-4" viewBox="0 0 16 16"><path d="M1 2h14v10H1zM5 13h7v2H5z" fill="#8ac0e0" stroke="#d8d8d8"/><circle cx="8" cy="7" r="5" fill="#eaa" stroke="#d02050" stroke-width="2"/><path d="M5 4l6 6" stroke="#d02050" stroke-width="2"/></svg>
            <svg class="h-4 w-4" viewBox="0 0 16 16"><circle cx="8" cy="8" r="7" fill="#ddd" stroke="#666"/><circle cx="8" cy="4" r="2" fill="#333"/><circle cx="4" cy="8" r="2" fill="#333"/><circle cx="8" cy="12" r="2" fill="#333"/><path d="M5 8l4 5 6-11" fill="none" stroke="#28a828" stroke-width="2"/></svg>
            <svg class="h-4 w-4" viewBox="0 0 16 16"><path d="M3 1h5v4H3zM1 5h9v8H1z" fill="#b8b8b8"/><circle cx="11" cy="11" r="5" fill="#2fb040"/><path d="M8 11l2 2 4-4" fill="none" stroke="#fff" stroke-width="2"/></svg>
            <svg class="h-4 w-4" viewBox="0 0 16 16"><path d="M3 16v-3M7 16v-5M11 16V7M15 16V3" stroke="#ddd" stroke-width="3"/><circle cx="6" cy="6" r="6" fill="#d82828"/><path d="M3 3l6 6M9 3L3 9" stroke="#fff" stroke-width="2"/></svg>
            <svg class="h-4 w-4" viewBox="0 0 16 16"><path d="M1 2h14v9H1z" fill="#111" stroke="#777"/><path d="M2 7h3l2-4 2 6 2-3h3" fill="none" stroke="#fff"/><path d="M4 14l4-3 5 3" stroke="#6ab0e8" stroke-width="2" fill="none"/></svg>
            <svg class="h-4 w-4" viewBox="0 0 16 16"><path d="M2 1v14" stroke="#fff" stroke-width="2"/><path d="M3 2h6v2h6l-2 3 1 2H8V7H3z" fill="#fff"/></svg>
            <svg class="h-4 w-4" viewBox="0 0 16 16"><path d="M1 5h4l5-4v14l-5-4H1z" fill="#d87868" stroke="#f0c8c0"/></svg>
            <svg class="h-4 w-4" viewBox="0 0 16 16"><path d="M1 6h3l4-4v12l-4-4H1z" fill="#fff"/><path d="M10 5q2 3 0 6M12 3q4 5 0 10" fill="none" stroke="#fff"/></svg>
            <svg class="h-4 w-4" viewBox="0 0 16 16"><path d="M2 14v-2M5 14v-4M8 14V8M11 14V5M14 14V3" stroke="#fff" stroke-width="2"/></svg>
        </div>
        <p class="ml-[16px] mr-[9px] w-[63px] text-center">12:24<br>03/04/2014</p>
        <button aria-label="Show desktop" class="h-[39px] w-[13px] border border-[#5f87b8] bg-white/20"></button>
    </nav>

    <script>
        // Shared looks of the small repeated parts
        var looks = {
            '.tool': 'flex h-[23px] w-[23px] shrink-0 items-center justify-center',
            '.tool svg': 'h-4 w-4 overflow-visible',
            '.pressed': 'border border-[#a0a0a0] border-b-white border-r-white bg-[#f8f8f8]',
            '.sep': 'ml-[3px] mr-[3px] h-[19px] w-px shrink-0 bg-[#a0a0a0]',
            '.grip': 'ml-px mr-[3px] h-[25px] w-1 shrink-0 border-x border-[#a0a0a0] bg-white',
            '.combo': 'relative block h-[22px] shrink-0',
            '.combo select': 'block h-full w-full appearance-none overflow-hidden border-2 border-[#808080] border-b-[#d8d8d8] border-r-[#d8d8d8] bg-white pl-px pr-[17px] text-[14px] font-bold leading-[16px]',
            '.drop': 'flex h-[13px] w-3 items-center border-l border-[#a0a0a0] pl-1',
            '.push': 'h-[21px] border border-[#808080] border-l-white border-t-white bg-[#efefef] whitespace-nowrap shadow-[1px_1px_0_#b0b0b0]',
            '.scrollbar': 'flex h-[17px] items-center bg-[#ededed] px-[6px]',
            '.task': 'flex h-[38px] w-12 shrink-0 items-center justify-center rounded-[3px]',
            '.task svg': 'h-8 w-8',
            '.open': 'border border-[#a8c4e4] bg-white/30',
            '.stack': 'h-[38px] w-[3px] shrink-0 rounded-r border-r border-[#8fb0d8] bg-white/20'
        };
        var downArrow = '<svg class="h-1 w-[7px] shrink-0" viewBox="0 0 7 4"><path d="M0 0h7L3.500 4z"/></svg>';
        document.querySelectorAll('.combo').forEach(function (el) {
            el.insertAdjacentHTML('beforeend', '<i class="pointer-events-none absolute bottom-[2px] right-[2px] top-[2px] flex w-[15px] items-center justify-center border border-white border-b-[#808080] border-r-[#808080] bg-[#efefef]">' + downArrow + '</i>');
        });
        document.querySelectorAll('.drop').forEach(function (el) { el.innerHTML = downArrow; });
        document.querySelectorAll('.scrollbar').forEach(function (el) {
            el.innerHTML = '<svg class="h-[7px] w-1" viewBox="0 0 4 7"><path d="M4 0v7L0 3.500z" fill="#444"/></svg>' +
                '<i class="ml-2 h-[15px] w-[15px] rounded-xs border border-[#979797] bg-linear-to-b from-[#f4f4f4] to-[#c9c9cb]"></i>' +
                '<svg class="ml-auto h-[7px] w-1" viewBox="0 0 4 7"><path d="M0 0v7l4-3.500z" fill="#444"/></svg>';
        });
        Object.keys(looks).forEach(function (selector) {
            document.querySelectorAll(selector).forEach(function (el) {
                var names = looks[selector].split(' ');
                // an explicit width on the element wins
                if (/(^| )w-/.test(el.getAttribute('class') || '')) {
                    names = names.filter(function (n) { return n.indexOf('w-') !== 0; });
                }
                names.forEach(function (n) { el.classList.add(n); });
            });
        });

        // Signal list: name, icon colour, trace colour
        var signals = [
            ['A0', '#700808', '#5a0a0a'], ['A1', '#e81010', '#e01010'],
            ['A2', '#f88848', '#e07848'], ['A3', '#f8f018', '#f0e880'], ['A4', '#18f080', '#48c860'],
            ['A5', '#0808e0', '#1414b0'], ['A6', '#f010e8', '#c020c0'], ['A7', '#808078', '#808078'],
            ['B0', '#700808', '#5a0a0a'], ['B1', '#e81010', '#b81414'], ['B2', '#f88848', '#e07848'],
            ['B3', '#f8f018', '#f0e880'], ['B4', '#18f080', '#48c860'], ['B5', '#0808e0', '#1414b0'],
            ['B6', '#f010e8', '#c020c0'], ['B7', '#808078', '#808078']
        ];
        var noCare = '<svg class="h-[13px] w-[13px]" viewBox="0 0 13 13"><path d="M.5.5h12v12H.5z" fill="#c4c4c4" stroke="#777" stroke-dasharray="1 1"/><path d="M2 2l9 9M11 2l-9 9" stroke="#888"/></svg>';
        var rising = '<svg class="h-[13px] w-[13px]" viewBox="0 0 13 13"><path d="M.5.5h12v12H.5z" fill="#c4c4c4" stroke="#777" stroke-dasharray="1 1"/><path d="M0 12h4l4-10h5" fill="none" stroke="#000" stroke-width="2"/></svg>';

        var list = '<li class="flex h-[26px] items-center bg-[#d8d0b0] pb-[3px] pl-[23px]"><svg class="h-[11px] w-[11px]" viewBox="0 0 11 11"><path d="M0 0h11L5.500 11z"/></svg><span class="ml-[26px] mr-1">Bus1</span><span class="text-[#1c1ca0]">(I2C)</span></li>';
        signals.forEach(function (s, i) {
            if (i < 2) {
                list += '<li class="flex h-[26px] items-center overflow-hidden border-b border-[#dcdad0] bg-[#ece9d8] pb-px pl-[77px]"><svg class="mr-[2px] h-[9px] w-[10px] shrink-0" viewBox="0 0 10 9"><circle cx="5" cy="4.500" r="4.500" fill="' + s[1] + '"/></svg><b class="mr-2 font-semibold">' + s[0] + '</b><span class="w-[6px] overflow-hidden text-[#999]">' + s[0] + '</span></li>';
            } else {
                list += '<li class="flex h-[26px] items-center border-b border-[#dcdad0] bg-[#ece9d8] pb-px pl-[41px]"><svg class="mr-[5px] h-3 w-[14px]" viewBox="0 0 14 12"><path d="M14 0L9 9Q6 13 2 11Q-1 7 3 4Z" fill="' + s[1] + '"/><path d="M1 6q-1 5 4 5" fill="none" stroke="#8888" stroke-width="1"/></svg><b class="mr-2 w-[14px] font-semibold">' + s[0] + '</b><span class="text-[#999]">' + s[0] + '</span></li>';
            }
        });
        document.getElementById('signals').innerHTML = list;

        function cells(first, icon0) {
            var html = '<button class="flex h-[26px] w-full items-stretch border-l border-t border-black pb-px">' +
                '<span class="flex flex-1 items-center justify-center">' + first + '</span><span class="flex w-2 items-center border-l border-[#888] pl-px">' +
                '<svg class="h-1 w-[5px]" viewBox="0 0 5 4"><path d="M0 0h5L2.500 4z"/></svg></span></button>';
            signals.forEach(function (s, i) {
                html += '<div class="h-[26px] pr-px"><button aria-label="' + s[0] + '" class="flex h-[25px] w-full items-center justify-center border border-[#a0a0a0]">' + (i === 0 ? icon0 : noCare) + '</button></div>';
            });
            return html;
        }
        document.getElementById('triggers').innerHTML = cells('', rising);
        document.getElementById('filters').innerHTML = cells(noCare, noCare);

        // Waveform plot, x measured from the left edge of the ruler
        var T = 500, step = 100;
        var plot = '<rect y="28" width="100%" height="442" fill="#000"/>';
        for (var x = T - 500; x <= T + 700; x += 20) {
            plot += '<path d="M' + (x + 0.5) + ' ' + ((x - T) % step === 0 ? 23 : 25) + 'V28" stroke="#000"/>';
        }
        for (var n = -4; n <= 5; n++) {
            var label = n === 0 ? '0' : (n * 225.28).toFixed(2);
            plot += '<text x="' + (T + n * step + (n === 0 ? 1 : 4)) + '" y="22" font-size="11" text-anchor="middle">' + label + '</text>';
        }
        for (var r = 0; r < 17; r++) {
            plot += '<path d="M46 ' + (r * 26 + 41.5) + 'H' + T + '" stroke="#383838"/>';
        }
        signals.forEach(function (s, i) {
            var y = i === 0 ? 77.5 : i === 1 ? 83 : i * 26 + 77.5;
            plot += '<path d="M' + T + ' ' + y + 'H953" stroke="' + s[2] + '" stroke-width="' + (i === 1 ? 2 : 1) + '"/>';
        });
        plot += '<path d="M0 55.500H2000" stroke="#fff" stroke-dasharray="4 3"/>';
        var flags = [[46, 'Ds', 18, '#1878e0', '#b0a8a0'], [271, 'A', 12, '#f6f020', '#000'], [361, 'B', 12, '#30d8e0', '#000'], [500, 'T', 12, '#e81414', '#ddd'], [955, 'Dp', 18, '#1878e0', '#b0a8a0']];
        flags.forEach(function (f) {
            plot += '<path d="M' + f[0] + ' 12v4M' + f[0] + ' 28v442" stroke="' + f[3] + '" stroke-width="2"/>' +
                '<path d="M' + (f[0] - f[2] / 2) + ' 12.500h' + f[2] + 'v-12.500" fill="none" stroke="#222"/>' +
                '<rect x="' + (f[0] - f[2] / 2) + '" width="' + f[2] + '" height="12" fill="' + f[3] + '"/>' +
                '<text x="' + f[0] + '" y="10" font-size="12" text-anchor="middle" fill="' + f[4] + '">' + f[1] + '</text>';
        });
        for (var u = 0; u < 17; u++) {
            plot += '<text x="451" y="' + (u * 26 + 41) + '" font-size="14" fill="#fff">Unknown</text>';
        }
        plot += '<path d="M501 31.500H951L954 41L951 51.500H501z" fill="#333" stroke="#0c780c"/><text x="733" y="46" font-size="14" text-anchor="middle" fill="#fff">Unknown</text>' +
            '<path d="M500 28v30" stroke="#e81414" stroke-width="2"/>';
        document.getElementById('plot').innerHTML = plot;

        // Statistics table
        var heads = ['CHANNEL', 'Full Period', 'Positive Per...', 'Negative P...', 'Conditional ...', 'Conditional ...', 'Conditional ...', 'Start Pos', 'End Pos', 'Selected Data', ''];
        document.getElementById('stat-head').innerHTML = '<tr>' + heads.map(function (h, i) {
            return '<th class="h-[17px] border-b-2 border-r-2 border-[#808080] bg-[#efefef] pl-[5px] text-left font-normal whitespace-nowrap ' + (i < 10 ? 'w-20' : 'border-r-0') + '">' + h + '</th>';
        }).join('') + '</tr>';
        document.getElementById('stat-body').innerHTML = signals.slice(0, 10).map(function (s, i) {
            var row = [s[0], '0', i === 1 ? '1' : '0', i === 1 ? '0' : '1', '0', '0', '0', 'Ds', 'Dp', '', ''];
            return '<tr>' + row.map(function (v, c) {
                return '<td class="h-[14px] border-b border-r border-[#f0f0f0] leading-[13px] ' + (c ? 'pl-[5px]' : 'pl-1') + '">' + v + '</td>';
            }).join('') + '</tr>';
        }).join('');
    </script>
</body>
</html>
